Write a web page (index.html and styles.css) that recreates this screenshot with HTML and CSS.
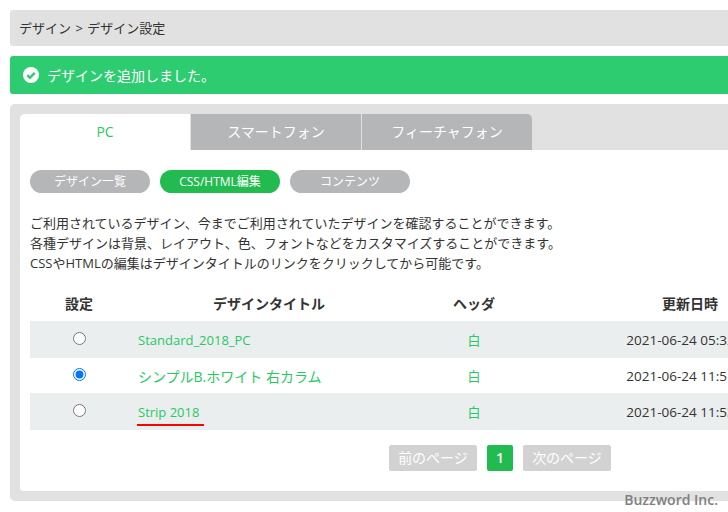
FILE: index.html
```html
<!DOCTYPE html>
<html lang="ja">
<head>
    <meta charset="UTF-8">
    <title>デザイン設定</title>
    <link rel="stylesheet" href="styles.css">
</head>
<body>

<div class="page">
    <div class="breadcrumb">デザイン &gt; デザイン設定</div>

    <div class="alert">
        <svg class="alert-icon" width="16" height="16" viewBox="0 0 16 16">
            <circle cx="8" cy="8" r="8" fill="#fff"/>
            <path d="M4.3 8.2l2.6 2.6 4.8-4.9" fill="none" stroke="#2ecc71" stroke-width="2.4"/>
        </svg>
        デザインを追加しました。
    </div>

    <div class="panel">
        <div class="tabs">
            <a class="tab active">PC</a>
            <a class="tab">スマートフォン</a>
            <a class="tab">フィーチャフォン</a>
        </div>

        <div class="tab-body">
            <div class="pills">
                <a class="pill">デザイン一覧</a>
                <a class="pill active">CSS/HTML編集</a>
                <a class="pill">コンテンツ</a>
            </div>

            <p class="desc">
                ご利用されているデザイン、今までご利用されていたデザインを確認することができます。<br>
                各種デザインは背景、レイアウト、色、フォントなどをカスタマイズすることができます。<br>
                CSSやHTMLの編集はデザインタイトルのリンクをクリックしてから可能です。
            </p>

            <table class="designs">
                <thead>
                    <tr>
                        <th class="col-set">設定</th>
                        <th class="col-title">デザインタイトル</th>
                        <th class="col-head">ヘッダ</th>
                        <th class="col-date">更新日時</th>
                        <th></th>
                    </tr>
                </thead>
                <tbody>
                    <tr>
                        <td class="center"><input type="radio" name="design"></td>
                        <td><a>Standard_2018_PC</a></td>
                        <td class="center"><a>白</a></td>
                        <td class="center date">2021-06-24 05:32:18</td>
                        <td></td>
                    </tr>
                    <tr>
                        <td class="center"><input type="radio" name="design" checked></td>
                        <td><a class="big">シンプルB.ホワイト 右カラム</a></td>
                        <td class="center"><a>白</a></td>
                        <td class="center date">2021-06-24 11:51:07</td>
                        <td></td>
                    </tr>
                    <tr>
                        <td class="center"><input type="radio" name="design"></td>
                        <td><a class="marked">Strip 2018</a></td>
                        <td class="center"><a>白</a></td>
                        <td class="center date">2021-06-24 11:53:40</td>
                        <td></td>
                    </tr>
                </tbody>
            </table>

            <div class="pager">
                <a class="page-btn">前のページ</a>
                <a class="page-btn current">1</a>
                <a class="page-btn">次のページ</a>
            </div>
        </div>
    </div>
</div>

<div class="credit">Buzzword Inc.</div>

</body>
</html>
```

FILE: styles.css
```css
* { box-sizing: border-box; margin: 0; padding: 0; }
html, body { height: 512px; overflow: hidden; }
body {
    font-family: "Open Sans", "Noto Sans CJK JP", sans-serif;
    font-size: 13px;
    color: #333;
    background: #fff;
    position: relative;
}
.page {
    width: 1000px;
    padding: 10px;
}

/* パンくず */
.breadcrumb {
    height: 36px;
    line-height: 36px;
    padding-left: 9px;
    word-spacing: 1px;
    background: #e1e1e1;
    border-radius: 3px;
    margin-bottom: 10px;
}

/* 完了メッセージ */
.alert {
    display: flex;
    align-items: center;
    gap: 8px;
    height: 38px;
    padding-left: 13px;
    background: #2ecc71;
    color: #fff;
    font-size: 14px;
    border-radius: 3px;
    margin-bottom: 10px;
}

/* パネルとタブ */
.panel {
    background: #e1e1e1;
    border-radius: 5px;
    padding: 10px;
}
.tabs {
    display: flex;
    gap: 1px;
}
.tab {
    width: 170px;
    height: 36px;
    line-height: 36px;
    text-align: center;
    background: #b5b6b7;
    color: #fff;
    font-size: 14px;
}
.tab:last-child { border-radius: 0 5px 0 0; }
.tab.active {
    background: #fff;
    color: #28c864;
    border-radius: 5px 0 0 0;
}
.tab-body {
    height: 341px;
    background: #fff;
    border-radius: 0 0 3px 3px;
    padding: 20px 10px 0;
}

/* ピル */
.pills {
    display: flex;
    gap: 10px;
    margin-bottom: 20px;
}
.pill {
    width: 120px;
    height: 23px;
    line-height: 23px;
    text-align: center;
    background: #b5b6b7;
    color: #fff;
    font-size: 12px;
    border-radius: 12px;
}
.pill.active { background: #22bb4f; }

.desc {
    font-size: 13px;
    line-height: 20px;
    margin-bottom: 20px;
}

/* テーブル */
.designs {
    width: 100%;
    table-layout: fixed;
    border-collapse: collapse;
    font-size: 13px;
}
.col-set { width: 98px; }
.col-title { width: 282px; }
.col-head { width: 128px; }
.col-date { width: 304px; }
.designs th {
    height: 28px;
    padding-bottom: 8px;
    font-size: 14px;
    font-weight: 600;
    text-align: center;
}
.designs td {
    height: 37px;
    padding: 0 10px;
}
.designs tbody tr:nth-child(odd) { background: #ebeeef; }
.designs tbody tr:nth-child(even) td { height: 35px; }
.center { text-align: center; }
.date { font-size: 13.5px; }
.designs a { color: #28c864; }
.designs a.big { font-size: 14px; }
.designs input { vertical-align: 0; }

/* 赤い下線の注記 */
.marked { position: relative; }
.marked::after {
    content: "";
    position: absolute;
    left: -1px;
    right: -5px;
    bottom: -5px;
    height: 2px;
    background: #f00;
}

/* ページャ */
.pager {
    display: flex;
    justify-content: center;
    gap: 10px;
    margin-top: 15px;
}
.page-btn {
    width: 88px;
    height: 26px;
    line-height: 26px;
    text-align: center;
    background: #d2d2d2;
    color: #fff;
    font-size: 14px;
    border-radius: 2px;
}
.page-btn.current {
    width: 26px;
    background: #22bb4f;
    font-weight: 600;
}

.credit {
    position: absolute;
    right: 10px;
    bottom: 2px;
    color: #808080;
    font-size: 14px;
    font-weight: 600;
    line-height: 20px;
}
```
